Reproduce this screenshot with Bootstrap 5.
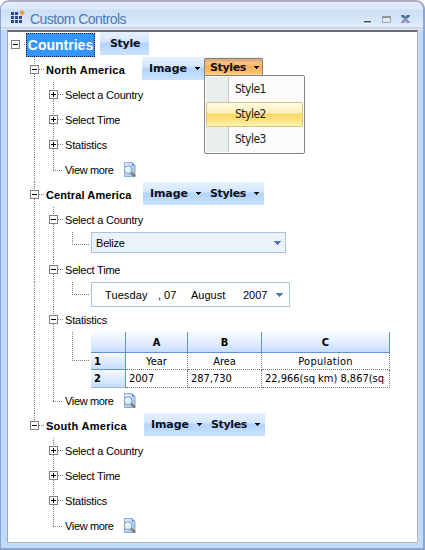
<!DOCTYPE html>
<html lang="en">
<head>
<meta charset="utf-8">
<meta name="viewport" content="width=device-width, initial-scale=1">
<title>Custom Controls</title>
<link href="https://cdn.jsdelivr.net/npm/bootstrap@5.3.0/dist/css/bootstrap.min.css" rel="stylesheet">
<style>
body{width:425px;height:550px;overflow:hidden;background:#fff;font:11px/13px "Liberation Sans",Arial,sans-serif;color:#000}
.win{width:425px;height:550px;background:#bfdbff;border:1px solid #8fa5cd;border-top-color:#a9adbd;border-width:2px 2px 2px 1px;border-radius:9px 9px 0 0;overflow:hidden}
.titlebar{height:28px;padding:2px 12px 0 10px;background:linear-gradient(#e6eeff 0,#dce7fb 7px,#cbdff5 8px,#d8e6fa 19px,#e3ecff 25px,#b7c2d8 26px,#dfe7f5 27px)}
.caption{font-size:14px;line-height:17px;color:#4a7ab5;letter-spacing:-.55px;padding-top:4px}
.winbtns{margin-top:3px}
.client{width:411px;height:513px;margin-left:6px;background:#fff;border:1px solid #b4b4b0;border-top:2px solid #6b6a6c;border-left-color:#a8a8a8;padding:0 0 0 3px}
.node{height:25px}
.node.h56{height:56px}
.g{width:19px;flex:none;display:flex;flex-direction:column;align-items:flex-start}
.g i,.hl{display:block;flex:none}
.v{width:1px;margin-left:4px;background:repeating-linear-gradient(#808080 0 1px,transparent 1px 2px)}
.v.full{height:100%}
.v.bot8{height:8px}.v.t13{height:13px}
.gap8{height:8px}
.hl{height:1px;background:repeating-linear-gradient(90deg,#808080 0 1px,transparent 1px 2px)}
.mid{width:19px;display:flex;align-items:center}
.bx{width:9px;height:9px;flex:none;display:block}
.region{font-weight:700;letter-spacing:.28px;padding-top:7px;margin-left:-3px;flex:none;white-space:nowrap}
.region.tight{letter-spacing:.1px}
.nv{padding-top:7px;margin-left:-3px;white-space:nowrap;letter-spacing:-.2px}
.nv.vm{width:48px;letter-spacing:-.35px}
.sel{margin:1px 0 0 -4px;width:69px;height:24px;background:#3197fd;border:1px dotted #123;color:#fff;font-weight:700;font-size:14px;line-height:22px;text-align:center}
.tools{height:23px;background:linear-gradient(#e6f1ff 0,#d3e6ff 10px,#b1d4ff 11px,#cae2ff 100%);font-family:"DejaVu Sans",Verdana,sans-serif;font-weight:700;font-size:11px;line-height:13px;color:#10101a;flex:none}
.tool{display:flex;align-items:center;height:22px;white-space:nowrap}
.car{flex:none;display:block}
.t-one{margin-left:5px;width:49px}
.t-one .tool{padding-left:10px;letter-spacing:-.3px}
.t-img{width:61px;padding-left:7px;letter-spacing:-.1px}
.t-sty{width:60px;padding-left:6px;letter-spacing:-.35px}
.t-sty .car{margin-left:8px}.t-img .car{margin-left:8px}
.openbtn{width:59px;height:18px;margin-top:1px;margin-left:1px;padding-left:5px;letter-spacing:-.35px;border:1px solid #8b8078;border-bottom:0;border-radius:2px 2px 0 0;background:linear-gradient(#d9a572 0,#f8c489 4px,#fbad55 8px,#fdb964 12px,#ffdc96 100%)}
.pop{position:absolute;left:62px;top:18px;width:101px;height:79px;background:#fbfbfb;border:1px solid #868686;border-radius:0 2px 2px 2px;padding:1px;font:12px/14px "DejaVu Sans Condensed","DejaVu Sans",sans-serif;color:#1c1c22;z-index:5}
.strip{background:linear-gradient(90deg,#e9eeee 0 22px,#c5c5c5 22px 23px,transparent 23px);height:100%}
.mi{height:25px;padding:4px 0 0 28px;letter-spacing:-.5px;border:1px solid transparent}
.mi.hot{border:1px solid #ddc47c;border-radius:2px;background:linear-gradient(#fffbe5 0,#ffefb8 10px,#ffd767 11px,#ffe17f 17px,#fff3b5 100%)}
.combo{width:195px;height:21px;background:#eaf2fb;border:1px solid #abc1de;padding:1px 4px 0;margin-left:4px;letter-spacing:-.2px}
.dt{width:199px;height:25px;border:1px solid #abc1de;margin-left:4px;padding:1px 5px 0 13px}
.dt span{flex:none;white-space:nowrap}
.sheet{width:299px;height:56px;margin-left:4px;display:grid;grid-template-columns:35px 62px 74px 128px;grid-template-rows:21px 17px 18px;font:11px/14px "DejaVu Sans Condensed","DejaVu Sans",sans-serif;letter-spacing:0}
.sheet>div{overflow:hidden;white-space:nowrap}
.hd{background:linear-gradient(#f7fbff,#deebff 60%,#c6ddff);border-right:1px solid #6593cf;border-bottom:1px solid #6593cf;font-weight:700;text-align:center;padding-top:4px}
.rh{background:linear-gradient(#f7fbff,#c6ddff);border-right:1px solid #6593cf;border-bottom:1px solid #9ebbe2;font-weight:700;padding:2px 3px 0}
.rh:nth-child(5){border-bottom-color:#6593cf}
.ce{border-right:1px dotted #777;border-bottom:1px dotted #777;padding:2px 3px 0}
.ce.wide{letter-spacing:.25px}
</style>
</head>
<body>
<svg width="0" height="0" class="position-absolute">
<defs>
<linearGradient id="pg" x1="0" y1="0" x2="1" y2="1"><stop offset="0" stop-color="#eaf3ff"/><stop offset="1" stop-color="#8fb7ee"/></linearGradient>
<symbol id="minus" viewBox="0 0 9 9"><rect x=".5" y=".5" width="8" height="8" fill="#fff" stroke="#808080"/><path d="M2 4.5h5" stroke="#000"/></symbol>
<symbol id="plus" viewBox="0 0 9 9"><rect x=".5" y=".5" width="8" height="8" fill="#fff" stroke="#808080"/><path d="M2 4.5h5M4.5 2v5" stroke="#000"/></symbol>
<symbol id="caret" viewBox="0 0 5 3"><path d="M0 0h5v1H4v1H3v1H2V2H1V1H0z" fill="#000"/></symbol>
<symbol id="drop" viewBox="0 0 7 4"><path d="M0 0h7v1H6v1H5v1H4v1H3V3H2V2H1V1H0z" fill="#4d7abf"/></symbol>
<symbol id="page" viewBox="0 0 13 16"><path d="M1.500.500h7.500l3 3v11h-10.500z" fill="url(#pg)" stroke="#86abe0"/><path d="M9 .500v3h3z" fill="#4f8be0"/><path d="M8 10.500l4 4" stroke="#94674f" stroke-width="2"/><circle cx="5" cy="7.700" r="3.900" fill="#d9f2fb" stroke="#8c9db2"/><path d="M3 7.500q.500-2.200 2.700-2.200" stroke="#fff" fill="none"/></symbol>
</defs>
</svg>
<main class="win">
<header class="titlebar d-flex align-items-center">
<svg width="15" height="15" viewBox="0 0 15 15" class="me-1"><path d="M0 2h3v3H0zM4 2h3v3H4zM0 6h3v3H0zM4 6h3v3H4zM8 6h3v3H8zM0 10h3v3H0zM4 10h3v3H4zM8 10h3v3H8z" fill="#2f4a8c"/><path d="M11 0l3 2.500-3 3-3-3z" fill="#f79433"/></svg>
<span class="caption me-auto">Custom Controls</span>
<svg class="winbtns" width="48" height="10" viewBox="0 0 48 10"><path d="M1 7h7v1H1z" fill="#4c5060"/><path d="M1 8h7v1H1z" fill="#9a9ad0"/><path d="M1 9h7v1H1z" fill="#fff"/><path d="M19.500 2.500h8v6h-8z" fill="#dcebf8" stroke="#aaa69f"/><path d="M19 2h9v2h-9z" fill="#98978f"/><path d="M38 1h3l1.500 2L44 1h3v1l-3 3 3 3v1h-3l-1.500-2L41 9h-3V8l3-3-3-3z" fill="#8f91c6"/><path d="M38 1h3l1.500 2L44 1h3v1l-2 2h-5l-2-2z" fill="#49758b"/></svg>
</header>
<section class="client" id="tree">
<div class="node d-flex"><div class="g"><i class="gap8"></i><div class="mid"><svg class="bx"><use href="#minus"/></svg><span class="hl ms-1" style="width:4px"></span></div></div><div class="sel">Countries</div><div class="tools t-one"><div class="tool">Style</div></div></div>
</section>
</main>
<script>
const tree=document.getElementById('tree');
const blank='<div class="g"></div>';
const through='<div class="g"><i class="v full"></i></div>';
const box=(kind,tail)=>`<div class="g"><i class="v bot8"></i><div class="mid"><svg class="bx"><use href="#${kind}"/></svg><span class="hl" style="width:5px"></span></div>${tail?'<i class="v bot8"></i>':''}</div>`;
const leafEnd='<div class="g"><i class="v t13"></i><span class="hl" style="width:9px;margin-left:4px"></span></div>';
const leafLong=h=>`<div class="g"><i class="v" style="height:${h}px"></i><span class="hl" style="width:17px;margin-left:4px"></span></div>`;
const caret='<svg class="car" width="5" height="3"><use href="#caret"/></svg>';
function row(html,cls=''){tree.insertAdjacentHTML('beforeend',`<div class="node d-flex ${cls}">${blank}${html}</div>`)}
function region(name,last,dx,open,cls=''){
  const second=open
   ?`<div class="tool openbtn">Styles<span class="ps-2">${caret}</span></div><div class="pop"><div class="strip"><div class="mi">Style1</div><div class="mi hot">Style2</div><div class="mi">Style3</div></div></div>`
   :`<div class="tool t-sty">Styles${caret}</div>`;
  row(`${box('minus',!last)}<div class="region ${cls}" style="width:${dx}px">${name}</div><div class="tools d-flex position-relative" style="width:121px"><div class="tool t-img">Image${caret}</div>${second}</div>`);
}
function item(line,kind,name){row(`${line}${box(kind,true)}<div class="nv">${name}</div>`)}
function more(line){row(`${line}${leafEnd}<div class="nv vm">View more</div><svg width="13" height="16" style="margin:5px 0 0 10px"><use href="#page"/></svg>`)}
region('North America',false,96,true);
['Select a Country','Select Time','Statistics'].forEach(n=>item(through,'plus',n));
more(through);
region('Central America',false,97,false,'tight');
item(through,'minus','Select a Country');
row(`${through}${through}${leafLong(12)}<div class="combo d-flex align-items-center justify-content-between"><span>Belize</span><svg width="7" height="4"><use href="#drop"/></svg></div>`);
item(through,'minus','Select Time');
row(`${through}${through}${leafLong(12)}<div class="dt d-flex align-items-center"><span style="width:53px;letter-spacing:.1px">Tuesday</span><span style="width:33px">, 07</span><span style="width:52px">August</span><span style="width:33px">2007</span><svg width="7" height="4"><use href="#drop"/></svg></div>`);
item(through,'minus','Statistics');
row(`${through}${through}${leafLong(28)}<div class="sheet"><div class="hd"></div><div class="hd">A</div><div class="hd">B</div><div class="hd">C</div><div class="rh">1</div><div class="ce text-center">Year</div><div class="ce text-center">Area</div><div class="ce wide text-center">Population</div><div class="rh">2</div><div class="ce">2007</div><div class="ce">287,730</div><div class="ce">22,966(sq km) 8,867(sq</div></div>`,'h56');
more(through);
region('South America',true,98,false);
['Select a Country','Select Time','Statistics'].forEach(n=>item(blank,'plus',n));
more(blank);
</script>
<script src="https://cdn.jsdelivr.net/npm/bootstrap@5.3.0/dist/js/bootstrap.bundle.min.js"></script>
</body>
</html>
